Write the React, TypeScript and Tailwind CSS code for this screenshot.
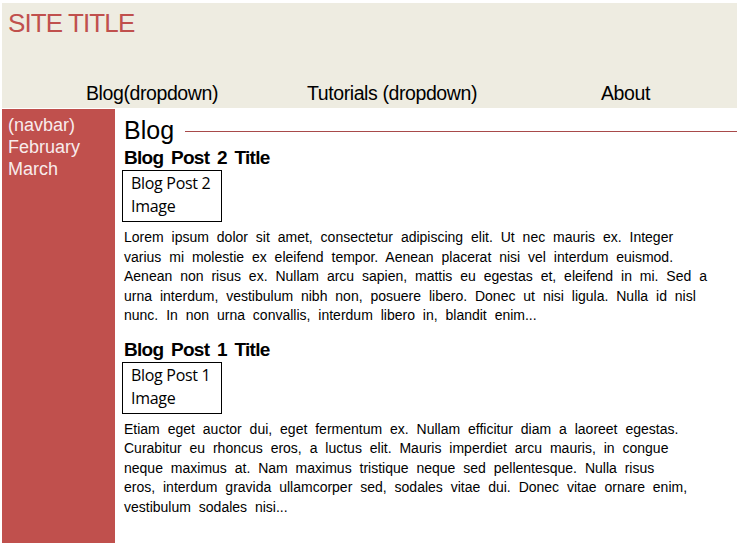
import React from 'react';

const posts = [
  {
    title: 'Blog Post 2 Title',
    image: ['Blog Post 2', 'Image'],
    lines: [
      'Lorem ipsum dolor sit amet, consectetur adipiscing elit. Ut nec mauris ex. Integer',
      'varius mi molestie ex eleifend tempor. Aenean placerat nisi vel interdum euismod.',
      'Aenean non risus ex. Nullam arcu sapien, mattis eu egestas et, eleifend in mi. Sed a',
      'urna interdum, vestibulum nibh non, posuere libero. Donec ut nisi ligula. Nulla id nisl',
      'nunc. In non urna convallis, interdum libero in, blandit enim...',
    ],
  },
  {
    title: 'Blog Post 1 Title',
    image: ['Blog Post 1', 'Image'],
    lines: [
      'Etiam eget auctor dui, eget fermentum ex. Nullam efficitur diam a laoreet egestas.',
      'Curabitur eu rhoncus eros, a luctus elit. Mauris imperdiet arcu mauris, in congue',
      'neque maximus at. Nam maximus tristique neque sed pellentesque. Nulla risus',
      'eros, interdum gravida ullamcorper sed, sodales vitae dui. Donec vitae ornare enim,',
      'vestibulum sodales nisi...',
    ],
  },
];

const App: React.FC = () => {
  return (
    <div className="w-[737px] h-[543px] bg-white overflow-hidden font-['Liberation_Sans',Arial,sans-serif] pt-[3px]">
      {/* header */}
      <header className="bg-[#eeece1] h-[105px] ml-[2px] flex flex-col">
        <h1 className="text-[26px] leading-[30px] text-[#c0504d] pl-[6px] pt-[5px] tracking-[-0.9px]">SITE TITLE</h1>
        <nav className="mt-auto pb-[4px] grid grid-cols-[20px_260px_220px_1fr] text-[19.5px] leading-[22px] text-black tracking-[-0.4px]">
          <span></span>
          <a className="text-center">Blog(dropdown)</a>
          <a className="text-center">Tutorials (dropdown)</a>
          <a className="text-left pl-[99px]">About</a>
        </nav>
      </header>

      <div className="flex h-[435px] pt-[1px]">
        {/* sidebar */}
        <aside className="w-[113px] ml-[2px] bg-[#c0504d] text-[#f8ecec] text-[18px] leading-[22px] pl-[6px] pt-[5px]">
          <div>(navbar)</div>
          <div>February</div>
          <div>March</div>
        </aside>

        {/* main */}
        <main className="flex-1 pl-[9px] pt-[8px]">
          <div className="flex items-center gap-[11px]">
            <h2 className="text-[25px] leading-[26px] text-black">Blog</h2>
            <div className="flex-1 border-t border-[#a84a4a] mt-[2px]"></div>
          </div>
          {posts.map((p, i) => (
            <article key={p.title} className={i > 0 ? 'mt-[13px]' : 'mt-[4px]'}>
              <h3 className="text-[19px] leading-[22px] font-bold text-black tracking-[-0.7px] [word-spacing:3px]">{p.title}</h3>
              <div className="w-[100px] h-[52px] ml-[-2px] mt-[1px] border border-black px-[8px] pt-[1px] font-['Open_Sans',sans-serif] text-[16px] leading-[23px] text-black tracking-[-0.3px]">
                {p.image.map((l) => (
                  <div key={l}>{l}</div>
                ))}
              </div>
              <div className="mt-[6px] text-[14px] leading-[19.5px] text-black [word-spacing:4px]">
                {p.lines.map((l) => (
                  <div key={l} className="whitespace-nowrap">{l}</div>
                ))}
              </div>
            </article>
          ))}
        </main>
      </div>
    </div>
  );
};

export default App;
